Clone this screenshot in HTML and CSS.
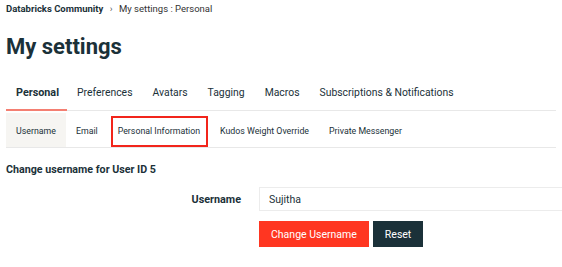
FILE: index.html
```html
<!DOCTYPE html>
<html>

    <head>
        <title>My settings</title>
        <meta name="viewport" content="width=device-width, initial-scale=1.0">
        <link rel="stylesheet" href="styles.css">
    </head>

    <body>
        <div class="crumbs">
            <a href="#" class="crumb-home">Databricks Community</a>
            <span class="crumb-sep">&rsaquo;</span>
            <span class="crumb-current">My settings : Personal</span>
        </div>

        <h1>My settings</h1>

        <ul class="tabs">
            <li class="tab active">Personal</li>
            <li class="tab">Preferences</li>
            <li class="tab">Avatars</li>
            <li class="tab">Tagging</li>
            <li class="tab">Macros</li>
            <li class="tab">Subscriptions &amp; Notifications</li>
        </ul>

        <ul class="subtabs">
            <li class="subtab active">Username</li>
            <li class="subtab">Email</li>
            <li class="subtab marked">Personal Information</li>
            <li class="subtab">Kudos Weight Override</li>
            <li class="subtab">Private Messenger</li>
        </ul>

        <h2>Change username for User ID 5</h2>

        <form class="user-form">
            <div class="form-row">
                <label for="login">Username</label>
                <input type="text" id="login" name="login" value="Sujitha">
            </div>
            <div class="form-actions">
                <button type="submit" class="btn btn-primary">Change Username</button>
                <button type="reset" class="btn btn-dark">Reset</button>
            </div>
        </form>
    </body>

</html>
```

FILE: styles.css
```css
body {
    font-family: Roboto, "Noto Sans", sans-serif;
    color: #1b3139;
    margin: 0;
    padding: 0 6px;
    overflow: hidden;
}

.crumbs {
    font-size: 9.5px;
    height: 18px;
    line-height: 18px;
}

.crumb-home {
    color: #1b3139;
    font-weight: 700;
    text-decoration: none;
}

.crumb-sep {
    margin: 0 4px;
    color: #555;
}

.crumb-current {
    color: #333;
}

h1 {
    font-size: 22px;
    font-weight: 700;
    margin: 18px 0 0;
    line-height: 22px;
}

.tabs,
.subtabs {
    list-style: none;
    margin: 0;
    padding: 0;
    display: flex;
    border-bottom: 1px solid #e8e8e8;
}

.tabs {
    margin-top: 17px;
}

.tab {
    font-size: 10.4px;
    padding: 2px 10px 0;
    height: 32px;
    line-height: 32px;
    border-bottom: 2px solid transparent;
    margin-bottom: -1px;
}

.tab.active {
    font-size: 10.8px;
    font-weight: 700;
    padding-right: 8px;
    border-bottom-color: #f47f72;
}

.subtabs {
    margin-top: 2px;
}

.subtab {
    font-size: 8.8px;
    padding: 2px 10px 0;
    height: 32px;
    line-height: 32px;
}

.subtab.active {
    background: #f6f5f2;
}

.subtab.marked {
    position: relative;
}

.subtab.marked::after {
    content: "";
    position: absolute;
    left: 3px;
    right: 2px;
    top: 3px;
    bottom: 0;
    border: 2px solid #f2251b;
}

h2 {
    font-size: 10.7px;
    font-weight: 700;
    margin: 15px 0 0;
}

.user-form {
    margin-top: 11px;
}

.form-row {
    display: flex;
    align-items: center;
}

.form-row label {
    width: 235px;
    text-align: right;
    font-size: 10.8px;
    font-weight: 700;
    padding-right: 18px;
}

.form-row input {
    flex: 1;
    height: 24px;
    box-sizing: border-box;
    border: 1px solid #ececec;
    border-right: none;
    margin-right: -6px;
    padding: 0 9px;
    font-family: inherit;
    font-size: 10.5px;
    color: #1b3139;
}

.form-actions {
    margin-top: 10px;
    padding-left: 253px;
    display: flex;
    gap: 4px;
}

.btn {
    font-family: inherit;
    font-size: 10.5px;
    color: #fff;
    border: none;
    height: 26px;
    padding: 0 12px;
}

.btn-primary {
    background: #ff3621;
}

.btn-dark {
    background: #1b3139;
}
```
